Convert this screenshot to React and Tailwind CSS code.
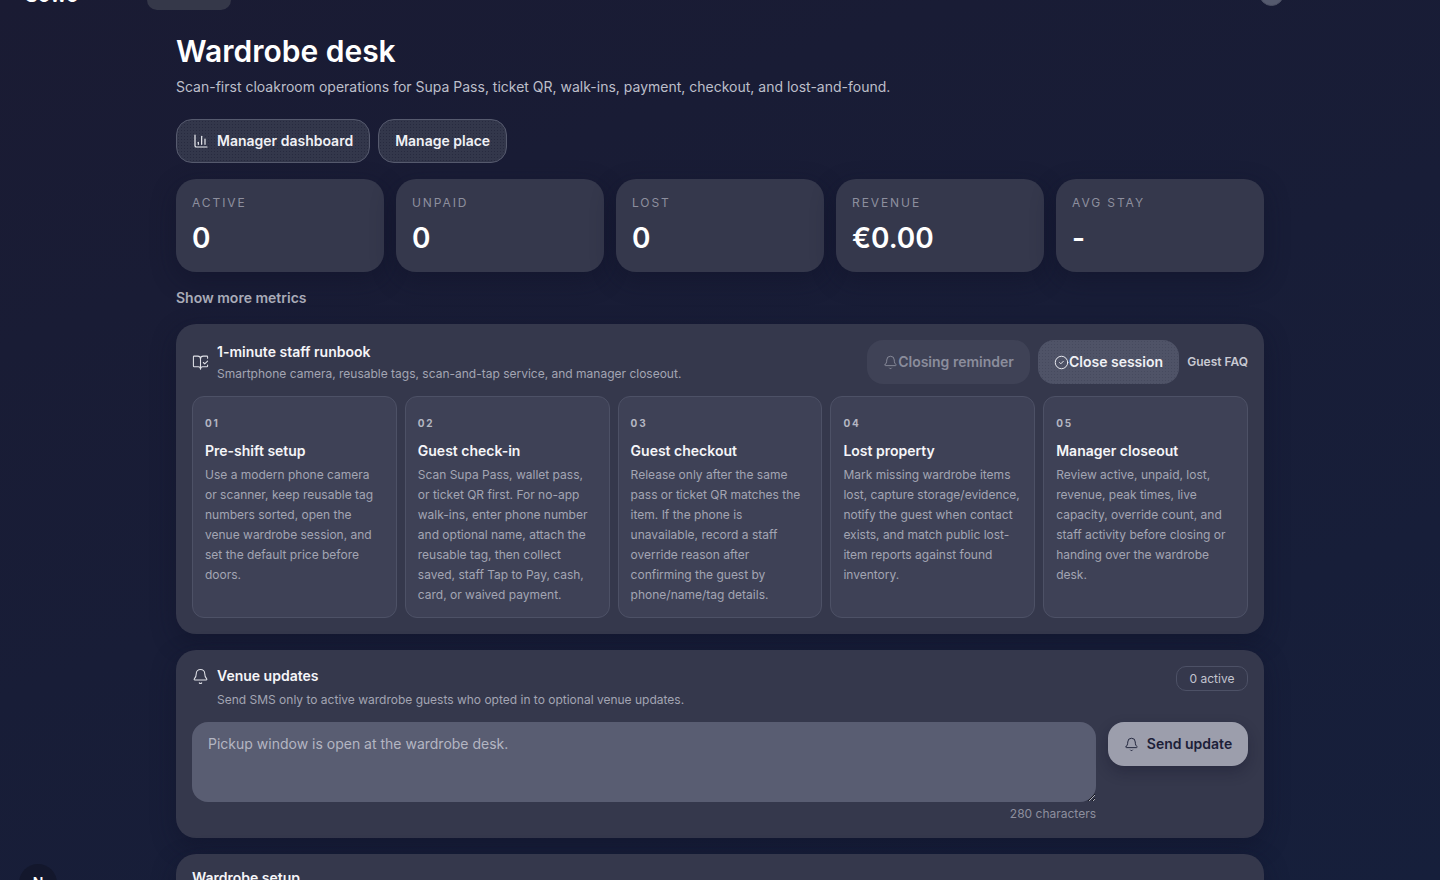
import React from 'react';
import { ChartColumn, BookOpenCheck, Bell, CircleCheck } from 'lucide-react';

const metrics = [
  { label: 'ACTIVE', value: '0' },
  { label: 'UNPAID', value: '0' },
  { label: 'LOST', value: '0' },
  { label: 'REVENUE', value: '€0.00' },
  { label: 'AVG STAY', value: '-' }
];

const steps = [
  {
    num: '01',
    title: 'Pre-shift setup',
    body: 'Use a modern phone camera or scanner, keep reusable tag numbers sorted, open the venue wardrobe session, and set the default price before doors.'
  },
  {
    num: '02',
    title: 'Guest check-in',
    body: 'Scan Supa Pass, wallet pass, or ticket QR first. For no-app walk-ins, enter phone number and optional name, attach the reusable tag, then collect saved, staff Tap to Pay, cash, card, or waived payment.'
  },
  {
    num: '03',
    title: 'Guest checkout',
    body: 'Release only after the same pass or ticket QR matches the item. If the phone is unavailable, record a staff override reason after confirming the guest by phone/name/tag details.'
  },
  {
    num: '04',
    title: 'Lost property',
    body: 'Mark missing wardrobe items lost, capture storage/evidence, notify the guest when contact exists, and match public lost-item reports against found inventory.'
  },
  {
    num: '05',
    title: 'Manager closeout',
    body: 'Review active, unpaid, lost, revenue, peak times, live capacity, override count, and staff activity before closing or handing over the wardrobe desk.'
  }
];

const App = () => {
  return (
    <div className="relative h-screen overflow-hidden bg-[linear-gradient(160deg,#1a1b33,#161f3b)] font-['Inter',sans-serif] text-white">
      {/* Top nav, scrolled mostly out of view */}
      <div className="relative h-[10px] overflow-hidden">
        <div className="absolute bottom-[5px] left-[25px] text-xl font-semibold leading-none">Sowo</div>
        <div className="absolute bottom-0 left-[147px] h-10 w-[84px] rounded-b-[10px] bg-[#353849]"></div>
        <div className="absolute bottom-[4px] left-[1259px] h-[25px] w-[25px] rounded-full border border-[#4b4f63] bg-[#555a6e]"></div>
      </div>

      <main className="mx-auto w-[1088px] pt-[22px]">
        <h1 className="text-[30px] font-semibold leading-[38px]">Wardrobe desk</h1>
        <p className="mt-[7px] text-sm leading-5 text-[#bdbfca]">
          Scan-first cloakroom operations for Supa Pass, ticket QR, walk-ins, payment, checkout, and lost-and-found.
        </p>

        <div className="mt-[22px] flex gap-2">
          <button className="flex h-11 items-center gap-2 rounded-2xl border border-[#565a6e] bg-[#33374b] bg-[radial-gradient(rgba(20,22,45,0.4)_1px,transparent_1px)] bg-[length:3px_3px] px-4 text-sm font-semibold text-[#f0f1f5]">
            <ChartColumn size={16} strokeWidth={1.75} />
            Manager dashboard
          </button>
          <button className="flex h-11 items-center rounded-2xl border border-[#565a6e] bg-[#33374b] bg-[radial-gradient(rgba(20,22,45,0.4)_1px,transparent_1px)] bg-[length:3px_3px] px-4 text-sm font-semibold text-[#f0f1f5]">
            Manage place
          </button>
        </div>

        {/* Metrics */}
        <div className="mt-4 grid grid-cols-5 gap-3">
          {metrics.map((m) => (
            <div key={m.label} className="h-[93px] rounded-[20px] bg-[#35384c] px-4 pt-4 shadow-[0_8px_24px_rgba(15,18,40,0.45)]">
              <div className="text-xs leading-4 tracking-[0.16em] text-[#8d8f9e]">{m.label}</div>
              <div className="mt-[9px] text-[28px] font-semibold leading-9">{m.value}</div>
            </div>
          ))}
        </div>

        <button className="mt-[16px] block h-5 text-sm font-semibold leading-5 text-[#a9abb8]">Show more metrics</button>

        {/* Staff runbook */}
        <section className="mt-4 rounded-[20px] bg-[#35384c] p-4 shadow-[0_8px_24px_rgba(15,18,40,0.45)]">
          <div className="flex items-center gap-2">
            <BookOpenCheck size={17} strokeWidth={1.5} className="text-[#dfe0e6]" />
            <div className="flex-1">
              <div className="text-sm font-semibold leading-5 text-[#f5f5f8]">1-minute staff runbook</div>
              <div className="mt-1 text-xs leading-4 text-[#a3a5b3]">
                Smartphone camera, reusable tags, scan-and-tap service, and manager closeout.
              </div>
            </div>
            <button className="flex h-11 w-[163px] items-center justify-center rounded-2xl bg-[#3f4256] text-sm font-semibold text-[#8b8d9c]">
              <Bell size={15} strokeWidth={1.5} />
              Closing reminder
            </button>
            <button className="flex h-11 w-[141px] items-center justify-center rounded-2xl bg-[#4f5367] bg-[radial-gradient(rgba(20,22,45,0.15)_1px,transparent_1px)] bg-[length:3px_3px] text-sm font-semibold text-[#f0f1f5]">
              <CircleCheck size={15} strokeWidth={1.5} />
              Close session
            </button>
            <button className="w-[61px] text-right text-xs font-semibold text-[#c9cad3]">Guest FAQ</button>
          </div>

          <div className="mt-3 grid grid-cols-5 gap-2">
            {steps.map((s) => (
              <div key={s.num} className="h-[222px] rounded-xl border border-[#4d5166] bg-[#3e4156] px-3 pt-[18px]">
                <div className="text-[10px] font-bold leading-4 tracking-[0.18em] text-[#b4b6c2]">{s.num}</div>
                <div className="mt-[10px] text-sm font-semibold leading-5 text-[#f5f5f8]">{s.title}</div>
                <p className="mt-1 text-xs leading-5 text-[#a3a5b3]">{s.body}</p>
              </div>
            ))}
          </div>
        </section>

        {/* Venue updates */}
        <section className="mt-4 h-[188px] rounded-[20px] bg-[#35384c] p-4 shadow-[0_8px_24px_rgba(15,18,40,0.45)]">
          <div className="flex items-start justify-between">
            <div>
              <div className="flex h-5 items-center gap-2 text-sm font-semibold text-[#f5f5f8]">
                <Bell size={17} strokeWidth={1.5} className="text-[#dfe0e6]" />
                Venue updates
              </div>
              <div className="mt-[6px] pl-[25px] text-xs leading-4 text-[#a3a5b3]">
                Send SMS only to active wardrobe guests who opted in to optional venue updates.
              </div>
            </div>
            <span className="flex h-[25px] w-[72px] items-center justify-center rounded-[10px] border border-[#4d5166] text-xs text-[#c2c4cf]">0 active</span>
          </div>

          <div className="mt-[14px] flex gap-3">
            <div className="flex-1">
              <textarea
                rows={3}
                placeholder="Pickup window is open at the wardrobe desk."
                className="block h-20 w-full rounded-2xl bg-[#595d72] px-4 py-3 text-sm leading-5 outline-none placeholder:text-[#b4b6c2]"
              />
              <div className="mt-1 text-right text-xs leading-4 text-[#8d8f9e]">280 characters</div>
            </div>
            <button className="flex h-11 w-[140px] items-center justify-center gap-2 rounded-2xl bg-[#9c9eac] text-sm font-semibold text-[#1c2038] shadow-[0_6px_14px_rgba(15,18,40,0.3)]">
              <Bell size={15} strokeWidth={1.5} />
              Send update
            </button>
          </div>
        </section>

        {/* Wardrobe setup */}
        <section className="mt-4 h-40 rounded-[20px] bg-[#35384c] px-4 pt-[14px] shadow-[0_8px_24px_rgba(15,18,40,0.45)]">
          <div className="text-sm font-semibold leading-5 text-[#f5f5f8]">Wardrobe setup</div>
        </section>
      </main>

      {/* Dev badge over the page corner */}
      <div className="absolute left-[19px] top-[864px] flex h-[38px] w-[38px] items-center justify-center rounded-full bg-[#13172c] text-sm font-semibold text-white">N</div>
    </div>
  );
};

export default App;
